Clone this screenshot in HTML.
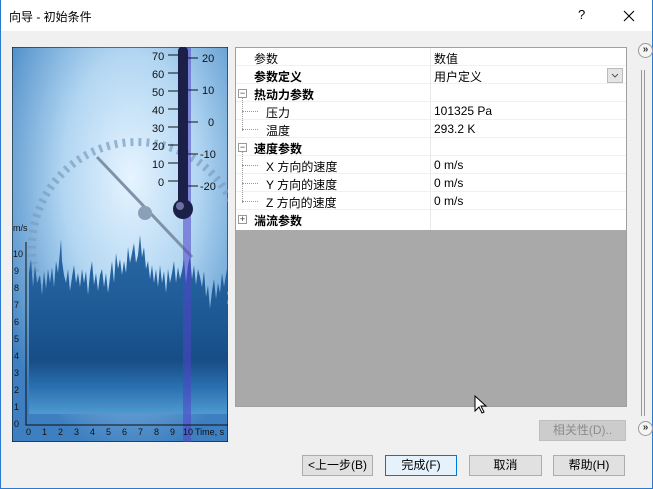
<!DOCTYPE html>
<html><head><meta charset="utf-8"><style>
*{margin:0;padding:0;box-sizing:border-box}
body{width:653px;height:489px;background:#f0f0f0;position:relative;overflow:hidden;font-family:"Liberation Sans","Noto Sans CJK SC",sans-serif;font-size:12px;color:#000}
.win{position:absolute;left:0;top:0;width:653px;height:489px;border:1px solid #2b79d0;border-top:none}
.title{position:absolute;left:0;top:0;width:653px;height:31px;background:#fff}
.title span{position:absolute;left:9px;top:8px;font-size:12px}
.abs{position:absolute}
.grid{position:absolute;left:235px;top:47px;width:392px;height:360px;border:1px solid #a0a0a0;background:#a9a9a9}
.rows{position:absolute;left:0;top:0;width:390px;height:182px;background:#fff}
.row{position:absolute;left:0;width:390px;height:18px;border-bottom:1px solid #f0f0f0}
.row .n{position:absolute;top:2px}
.row .v{position:absolute;left:198px;top:2px}
.b{font-weight:bold}
.col{position:absolute;left:194px;top:0;width:1px;height:182px;background:#e8e8e8}
.box{position:absolute;left:2px;top:5px;width:9px;height:9px;border:1px solid #999;background:#fff;font-size:9px;line-height:7px;text-align:center;color:#333}
.btn{position:absolute;height:21px;border:1px solid #adadad;background:#e1e1e1;text-align:center;line-height:19px;font-size:12px}
.dot{position:absolute;border-top:1px dotted #999}
.dv{position:absolute;border-left:1px dotted #999}
.circ{position:absolute;width:15px;height:15px;border:1px solid #999;border-radius:50%;background:#f5f5f5;font-size:10px;line-height:12px;text-align:center;font-weight:bold;color:#333}
</style></head><body>
<div class="title"><span>向导 - 初始条件</span>
<span style="left:578px;top:7px;font-size:13px">?</span>
<svg class="abs" style="left:623px;top:10px" width="12" height="12"><path d="M1 1L11 11M11 1L1 11" stroke="#000" stroke-width="1.1"/></svg>
</div>
<div class="win"></div>

<svg class="abs" style="left:12px;top:47px" width="216" height="395" viewBox="0 0 216 395">
<defs>
<radialGradient id="g1" cx="0.55" cy="0.33" r="0.7"><stop offset="0" stop-color="#e6f4ff"/><stop offset="0.45" stop-color="#b2d6f2"/><stop offset="0.8" stop-color="#6aa2d4"/><stop offset="1" stop-color="#3d7fc0"/></radialGradient>
<linearGradient id="g2" x1="0" y1="0" x2="0" y2="1"><stop offset="0" stop-color="#2a6aa8"/><stop offset="0.55" stop-color="#1a5590"/><stop offset="0.7" stop-color="#174d85"/><stop offset="0.85" stop-color="#2a70b0"/><stop offset="1" stop-color="#4f9ad0"/></linearGradient>
</defs>
<rect width="216" height="395" fill="url(#g1)" stroke="#000"/>
<circle cx="125" cy="200" r="105" fill="none" stroke="#7a9cc0" stroke-width="8" stroke-dasharray="3 5" opacity="0.7"/>
<line x1="85" y1="110" x2="180" y2="210" stroke="#7e93a8" stroke-width="3"/>
<circle cx="133" cy="166" r="7" fill="#8aa0b8"/>
<polygon fill="url(#g2)" points="17,225 19,212 21,240 23,218 25,236 28,228 30,248 32,224 34,242 36,222 38,236 40,220 42,240 44,214 46,226 48,204 49,192 50,214 52,228 54,236 56,222 58,244 60,230 62,218 64,236 66,226 68,240 70,222 72,236 74,224 76,248 78,226 80,214 82,238 84,226 86,244 88,228 90,222 92,240 94,226 96,246 98,230 100,214 102,236 104,206 106,222 108,212 110,228 112,214 114,226 116,200 118,216 120,206 122,196 124,216 126,208 128,188 130,210 132,200 134,222 136,214 138,232 140,218 142,236 144,222 146,240 148,218 150,236 152,224 154,246 156,222 158,236 160,226 162,214 164,236 166,220 168,232 170,224 172,212 174,236 176,218 178,210 180,232 182,218 184,238 186,222 188,230 190,240 192,224 194,250 196,238 198,262 200,244 202,232 204,252 206,236 208,246 210,226 212,240 215,222 215,367 17,367"/>
<rect x="171" y="0" width="8" height="395" fill="#5044c8" opacity="0.55"/>
<rect x="166" y="0" width="10" height="158" fill="#1c2048" rx="4"/>
<circle cx="171" cy="162" r="10" fill="#1c2048"/>
<circle cx="168" cy="159" r="4" fill="#6a70a0"/>
<g font-family="Liberation Sans" font-size="11" fill="#111">
<text x="140" y="13">70</text><text x="140" y="31">60</text><text x="140" y="49">50</text><text x="140" y="67">40</text><text x="140" y="85">30</text><text x="140" y="103">20</text><text x="140" y="121">10</text><text x="146" y="139">0</text>
<text x="190" y="15">20</text><text x="190" y="47">10</text><text x="196" y="79">0</text><text x="188" y="111">-10</text><text x="188" y="143">-20</text>
</g>
<g stroke="#111"><path d="M156 8h10M156 26h10M156 44h10M156 62h10M156 80h10M156 98h10M156 116h10M156 134h10M176 11h10M176 43h10M176 75h10M176 107h10M176 139h10"/></g>
<g font-family="Liberation Sans" font-size="9" fill="#111">
<text x="1" y="184">m/s</text>
<text x="1" y="210">10</text><text x="2" y="227">9</text><text x="2" y="244">8</text><text x="2" y="261">7</text><text x="2" y="278">6</text><text x="2" y="295">5</text><text x="2" y="312">4</text><text x="2" y="329">3</text><text x="2" y="346">2</text><text x="2" y="363">1</text><text x="2" y="380">0</text>
<text x="14" y="388">0</text><text x="30" y="388">1</text><text x="46" y="388">2</text><text x="62" y="388">3</text><text x="78" y="388">4</text><text x="94" y="388">5</text><text x="110" y="388">6</text><text x="126" y="388">7</text><text x="142" y="388">8</text><text x="158" y="388">9</text><text x="171" y="388">10</text><text x="183" y="388">Time, s</text>
</g>
<path d="M14 195V378H216" stroke="#111" fill="none"/>
</svg>

<div class="grid">
<div class="rows">
<div class="col"></div>
<div class="row" style="top:0"><span class="n" style="left:18px">参数</span><span class="v">数值</span></div>
<div class="row" style="top:18px"><span class="n b" style="left:18px">参数定义</span><span class="v">用户定义</span>
<div class="abs" style="left:371px;top:2px;width:16px;height:15px;border:1px solid #bbb;background:#e5e5e5"><svg width="14" height="13"><path d="M4 5l3 3 3-3" stroke="#555" fill="none"/></svg></div></div>
<div class="row" style="top:36px"><div class="box">−</div><span class="n b" style="left:18px">热动力参数</span></div>
<div class="row" style="top:54px"><span class="n" style="left:30px">压力</span><span class="v">101325 Pa</span></div>
<div class="row" style="top:72px"><span class="n" style="left:30px">温度</span><span class="v">293.2 K</span></div>
<div class="row" style="top:90px"><div class="box">−</div><span class="n b" style="left:18px">速度参数</span></div>
<div class="row" style="top:108px"><span class="n" style="left:30px">X 方向的速度</span><span class="v">0 m/s</span></div>
<div class="row" style="top:126px"><span class="n" style="left:30px">Y 方向的速度</span><span class="v">0 m/s</span></div>
<div class="row" style="top:144px"><span class="n" style="left:30px">Z 方向的速度</span><span class="v">0 m/s</span></div>
<div class="row" style="top:162px;border:none"><div class="box">+</div><span class="n b" style="left:18px">湍流参数</span></div>
<div class="dv" style="left:6px;top:50px;height:33px"></div>
<div class="dot" style="left:6px;top:63px;width:16px"></div>
<div class="dot" style="left:6px;top:81px;width:16px"></div>
<div class="dv" style="left:6px;top:104px;height:51px"></div>
<div class="dot" style="left:6px;top:117px;width:16px"></div>
<div class="dot" style="left:6px;top:135px;width:16px"></div>
<div class="dot" style="left:6px;top:153px;width:16px"></div>
</div>
</div>

<div class="circ" style="left:638px;top:43px">»</div>
<div class="abs" style="left:641px;top:70px;width:1px;height:346px;background:#999"></div>
<div class="abs" style="left:644px;top:70px;width:1px;height:346px;background:#999"></div>
<div class="circ" style="left:638px;top:421px">»</div>

<div class="btn" style="left:539px;top:420px;width:87px;color:#8c8c8c;border-color:#bfbfbf;background:#ccc">相关性(D)..</div>
<div class="btn" style="left:302px;top:455px;width:71px">&lt;上一步(B)</div>
<div class="btn" style="left:385px;top:455px;width:72px;border-color:#0078d7;background:#e5f1fb">完成(F)</div>
<div class="btn" style="left:469px;top:455px;width:73px">取消</div>
<div class="btn" style="left:553px;top:455px;width:72px">帮助(H)</div>
<svg class="abs" style="left:474px;top:395px" width="14" height="20"><path d="M1 1v15l4-4 3 6 2-1-3-6h5z" fill="#fff" stroke="#000"/></svg>
</body></html>
